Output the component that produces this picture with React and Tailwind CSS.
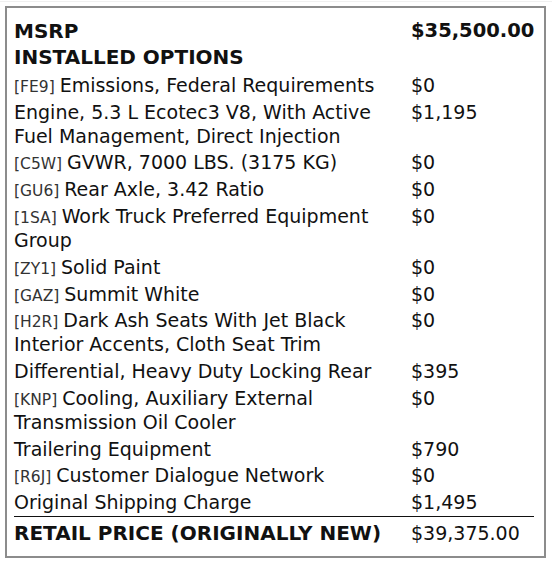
const options = [
  { code: "FE9", name: "Emissions, Federal Requirements", price: "$0" },
  { name: "Engine, 5.3 L Ecotec3 V8, With Active Fuel Management, Direct Injection", price: "$1,195" },
  { code: "C5W", name: "GVWR, 7000 LBS. (3175 KG)", price: "$0" },
  { code: "GU6", name: "Rear Axle, 3.42 Ratio", price: "$0" },
  { code: "1SA", name: "Work Truck Preferred Equipment Group", price: "$0" },
  { code: "ZY1", name: "Solid Paint", price: "$0" },
  { code: "GAZ", name: "Summit White", price: "$0" },
  { code: "H2R", name: "Dark Ash Seats With Jet Black Interior Accents, Cloth Seat Trim", price: "$0" },
  { name: "Differential, Heavy Duty Locking Rear", price: "$395" },
  { code: "KNP", name: "Cooling, Auxiliary External Transmission Oil Cooler", price: "$0" },
  { name: "Trailering Equipment", price: "$790" },
  { code: "R6J", name: "Customer Dialogue Network", price: "$0" },
  { name: "Original Shipping Charge", price: "$1,495" },
];

function App() {
  return (
    <div className="h-[566px] w-[552px] bg-white pt-px font-['DejaVu_Sans',sans-serif] text-[#111]">
      <div className="h-px w-full bg-[#f0f0f0]" />
      <div className="ml-[5px] mt-[4px] h-[552px] w-[541px] border-2 border-[#8c8c8c] pl-[7px] pr-[10px] pt-[10px]">
        <div className="grid grid-cols-[397px_1fr] py-[1px] text-[20px] leading-[24px] font-bold">
          <div>MSRP</div>
          <div className="text-[19.5px]">$35,500.00</div>
        </div>
        <div className="py-[1px] text-[20px] leading-[24px] font-bold">INSTALLED OPTIONS</div>
        <div className="mt-[1.5px]">
          {options.map((item) => (
            <div key={item.name} className="grid grid-cols-[397px_1fr] py-[1.4px] text-[19px] leading-[24px]">
              <div className="pr-[4px]">
                {item.code ? <span className="text-[15.5px] leading-none text-[#333]">[{item.code}] </span> : null}
                {item.name}
              </div>
              <div>{item.price}</div>
            </div>
          ))}
        </div>
        <div className="mt-[0.5px] grid grid-cols-[397px_1fr] border-t border-[#111] pt-[4px] leading-[24px]">
          <div className="text-[20px] font-bold">RETAIL PRICE (ORIGINALLY NEW)</div>
          <div className="text-[19px]">$39,375.00</div>
        </div>
      </div>
    </div>
  );
}

export default App;
